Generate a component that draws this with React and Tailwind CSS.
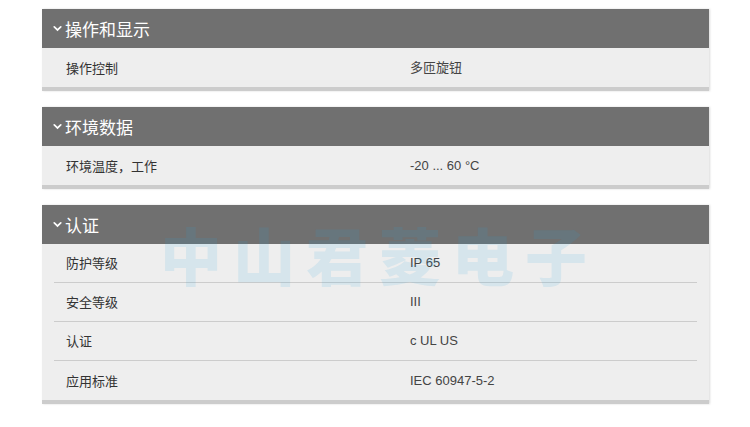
import React from "react";

const sections = [
  { title: "操作和显示", rows: [["操作控制", "多匝旋钮"]] },
  { title: "环境数据", rows: [["环境温度，工作", "-20 ... 60 °C"]] },
  {
    title: "认证",
    rows: [
      ["防护等级", "IP 65"],
      ["安全等级", "III"],
      ["认证", "c UL US"],
      ["应用标准", "IEC 60947-5-2"],
    ],
  },
];

function Chevron() {
  return (
    <svg width="9" height="6" viewBox="0 0 9 6" className="shrink-0">
      <path d="M0 0.8 L4.5 5.2 L9 0.8 L7.4 0 L4.5 2.8 L1.6 0 Z" fill="#ffffff" />
    </svg>
  );
}

export default function App() {
  return (
    <div className="relative w-[750px] h-[427px] bg-white overflow-hidden" style={{ fontFamily: '"Liberation Sans", "Noto Sans CJK SC", sans-serif' }}>
      <div className="flex flex-col gap-4 pt-[9px] pl-[42px] w-[709px]">
        {sections.map((s) => (
          <div key={s.title} className="flex flex-col border-b-4 border-[#cccccc] shadow-[1px_0_2px_rgba(0,0,0,0.15)]">
            <div className="flex items-center h-[39px] bg-[#707070] pl-[11px] gap-[3px]">
              <Chevron />
              <span className="text-[17px] text-white leading-none" style={{ fontFamily: '"Noto Sans CJK SC", sans-serif' }}>{s.title}</span>
            </div>
            <div className="flex flex-col bg-[#eeeeee] px-3">
              {s.rows.map(([k, v], i) => (
                <div
                  key={k}
                  className={
                    "flex items-center h-[39px] text-[13px] text-[#333333] " +
                    (i < s.rows.length - 1 ? "border-b border-[#cccccc]" : "")
                  }
                >
                  <span className="w-[356px] pl-3" style={{ fontFamily: '"Noto Sans CJK SC", sans-serif' }}>{k}</span>
                  <span className="text-[#444444]" style={{ fontFamily: '"Liberation Sans", "Noto Sans CJK SC", sans-serif' }}>{v}</span>
                </div>
              ))}
            </div>
          </div>
        ))}
      </div>
      <div
        className="absolute left-[160px] top-[223px] text-[62px] font-black leading-none tracking-[11px] text-[rgba(40,165,220,0.12)] pointer-events-none select-none whitespace-nowrap"
        style={{ fontFamily: '"Noto Sans CJK SC", sans-serif' }}
      >
        中山君菱电子
      </div>
    </div>
  );
}
